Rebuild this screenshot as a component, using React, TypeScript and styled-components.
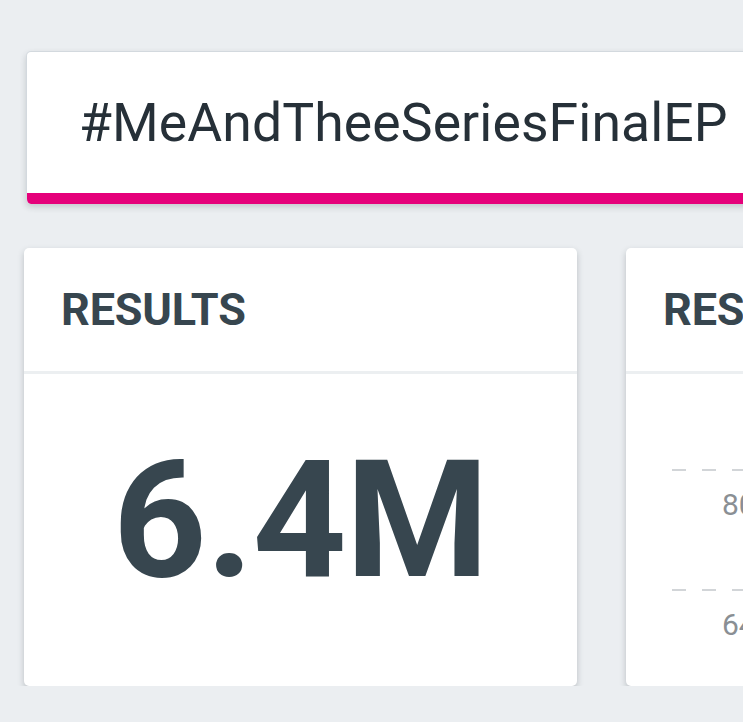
import React from 'react';
import styled, { createGlobalStyle } from 'styled-components';

const GlobalStyle = createGlobalStyle`
  html, body {
    margin: 0;
    padding: 0;
    background: #ebeef1;
    overflow: hidden;
  }
  body {
    font-family: Roboto, "Noto Sans", "Liberation Sans", sans-serif;
  }
`;

const Page = styled.main`
  width: 1240px;
  padding: 51px 0 0 24px;
  display: flex;
  flex-direction: column;
  gap: 44px;
`;

const HashtagCard = styled.section`
  margin-left: 2px;
  height: 153px;
  background: #fff;
  border: 1px solid #d3d9de;
  border-bottom: none;
  border-radius: 5px;
  box-shadow: 0 3px 6px rgba(40, 50, 60, 0.2);
  display: flex;
  flex-direction: column;
  overflow: hidden;
  box-sizing: border-box;
`;

const HashtagText = styled.h1`
  flex: 1;
  margin: 0;
  padding-left: 52px;
  display: flex;
  align-items: center;
  font-size: 53.5px;
  font-weight: 400;
  color: #263038;
  letter-spacing: 0.1px;
`;

const AccentBar = styled.div`
  height: 11px;
  background: #e5007a;
`;

const CardRow = styled.div`
  display: flex;
  gap: 49px;
`;

const Card = styled.section`
  width: 553px;
  height: 438px;
  background: #fff;
  border-radius: 5px;
  box-shadow: 0 3px 6px rgba(40, 50, 60, 0.25);
  display: flex;
  flex-direction: column;
  overflow: hidden;
`;

const CardHeader = styled.header`
  height: 123px;
  flex-shrink: 0;
  padding-left: 37px;
  display: flex;
  align-items: center;
  border-bottom: 3px solid #eceff1;
  font-size: 45px;
  font-weight: 700;
  color: #37464f;
  letter-spacing: -0.2px;
`;

const BigNumber = styled.div`
  flex: 1;
  display: flex;
  align-items: center;
  justify-content: center;
  padding-bottom: 20px;
  font-size: 164px;
  font-weight: 700;
  color: #37464f;
  letter-spacing: -1px;
`;

const Chart = styled.div`
  flex: 1;
  padding: 95px 0 0 46px;
  display: flex;
  flex-direction: column;
`;

const GridRow = styled.div`
  height: 120px;
  box-sizing: border-box;
  padding: 18px 0 0 50px;
  font-size: 30px;
  color: #8a8f94;
  background-image: repeating-linear-gradient(
    to right,
    #d2d5d8 0 14px,
    transparent 14px 30px
  );
  background-size: 100% 2px;
  background-repeat: no-repeat;
  background-position: top left;
`;

const axis = ['800K', '640K', '480K'];

export default function App() {
  return (
    <>
      <GlobalStyle />
      <Page>
        <HashtagCard>
          <HashtagText>#MeAndTheeSeriesFinalEP</HashtagText>
          <AccentBar />
        </HashtagCard>
        <CardRow>
          <Card>
            <CardHeader>RESULTS</CardHeader>
            <BigNumber>6.4M</BigNumber>
          </Card>
          <Card>
            <CardHeader>RESULTS OVER TIME</CardHeader>
            <Chart>
              {axis.map((label) => (
                <GridRow key={label}>{label}</GridRow>
              ))}
            </Chart>
          </Card>
        </CardRow>
      </Page>
    </>
  );
}
